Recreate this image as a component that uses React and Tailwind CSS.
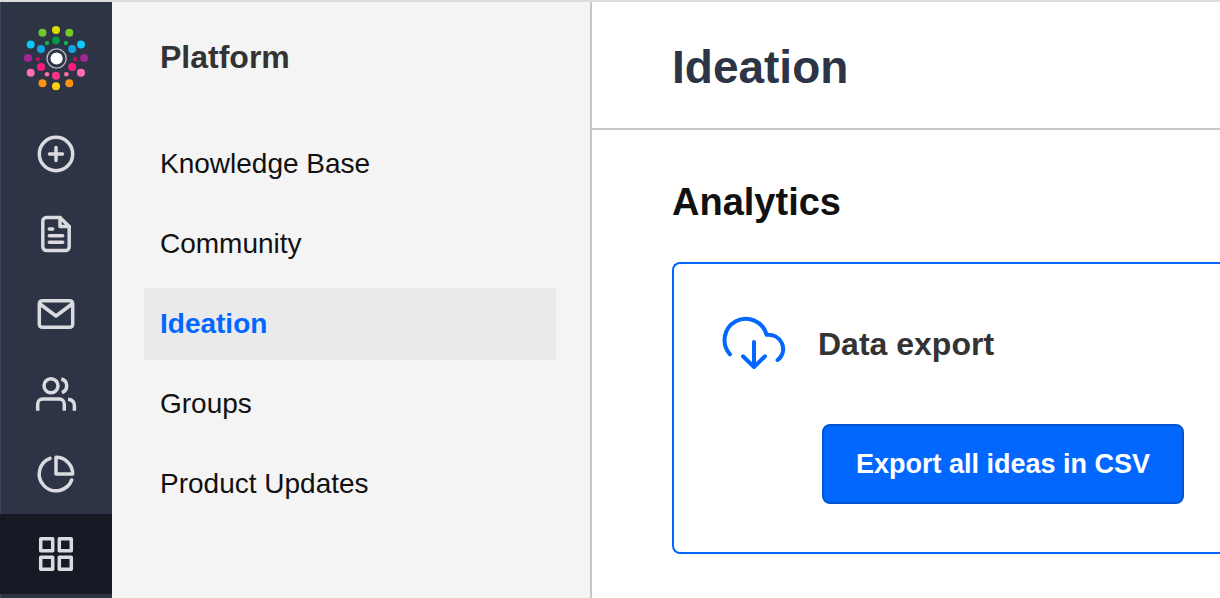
import React, { useState } from "react";
import clsx from "clsx";

const logoDots = [
  [56, 30, 4, "#dbe000"],
  [42.5, 32.8, 4, "#72c92b"],
  [69.3, 32.8, 4, "#72c92b"],
  [56, 40.3, 3.9, "#009a44"],
  [47, 43, 2.2, "#12b24a"],
  [66, 43, 2.2, "#12b24a"],
  [30.7, 44.6, 4, "#0cc8f7"],
  [81, 44.6, 4, "#0cc8f7"],
  [41, 49, 4, "#10a4e6"],
  [72.2, 49, 4, "#10a4e6"],
  [28, 58, 4.1, "#a4268f"],
  [84.2, 58, 4.1, "#a4268f"],
  [38, 59.3, 2.2, "#bd1164"],
  [75.2, 59.3, 2.2, "#bd1164"],
  [41, 67, 4, "#ff1a7f"],
  [72.2, 67, 4, "#ff1a7f"],
  [30.7, 72.7, 4, "#ff70ad"],
  [81, 72.7, 4, "#ff70ad"],
  [47, 74.3, 2.3, "#ff70ad"],
  [66.3, 74.3, 2.3, "#ff70ad"],
  [56, 75.7, 4, "#ff3385"],
  [42.5, 83.2, 4, "#ff930f"],
  [69.3, 83.2, 4, "#ff930f"],
  [56, 86.2, 4, "#ffd00d"],
];

const Logo = () => (
  <svg className="size-18" viewBox="20 22 72 72" aria-hidden="true">
    {logoDots.map(([cx, cy, r, fill]) => (
      <circle key={`${cx}-${cy}`} cx={cx} cy={cy} r={r} fill={fill} />
    ))}
    <circle cx="56.6" cy="58.5" r="9.6" fill="none" stroke="#b4b8c2" strokeWidth="1.4" />
    <circle cx="56.6" cy="58.5" r="6.1" fill="#fff" />
  </svg>
);

const RailIcon = ({ children }) => (
  <svg
    className="size-12"
    viewBox="0 0 48 48"
    fill="none"
    stroke="currentColor"
    strokeWidth="3.5"
    strokeLinecap="round"
    strokeLinejoin="round"
    aria-hidden="true"
  >
    {children}
  </svg>
);

const railItems = [
  {
    label: "Create",
    icon: (
      <>
        <circle cx="24" cy="24" r="16.7" />
        <path d="M24 17.5v13M17.5 24h13" />
      </>
    ),
  },
  {
    label: "Content",
    icon: (
      <>
        <path d="M28 7.5H14.5a3.7 3.7 0 0 0-3.7 3.7v25.6a3.7 3.7 0 0 0 3.7 3.7h19a3.7 3.7 0 0 0 3.7-3.7V16.5Z" />
        <path d="M28 7.5v9h9.2" />
        <path d="M17.3 19h3.4M17.3 25.7h13.4M17.3 32.2h13.4" />
      </>
    ),
  },
  {
    label: "Messages",
    icon: (
      <>
        <rect x="7.3" y="10.7" width="33.4" height="26.6" rx="3" />
        <path d="M8 14l16 12 16-12" />
      </>
    ),
  },
  {
    label: "Users",
    icon: (
      <>
        <circle cx="19" cy="15.7" r="7" />
        <path d="M5.7 40.7V34a5 5 0 0 1 5-5h16.6a5 5 0 0 1 5 5v6.7" strokeLinecap="butt" />
        <path d="M29.3 9a7 7 0 0 1 .5 13.500" strokeLinecap="butt" />
        <path d="M36 29.3c4 .4 6.4 2.6 6.4 6.3v5.1" strokeLinecap="butt" />
      </>
    ),
  },
  {
    label: "Reports",
    icon: (
      <>
        <path d="M18 8.3A16.8 16.8 0 1 0 39.7 30" />
        <path d="M24 7.3V24h16.7A16.7 16.7 0 0 0 24 7.3Z" />
      </>
    ),
  },
  {
    label: "Platform",
    active: true,
    icon: (
      <>
        <rect x="8.7" y="8.7" width="12" height="12" />
        <rect x="27.3" y="8.7" width="12" height="12" />
        <rect x="8.7" y="27.3" width="12" height="12" />
        <rect x="27.3" y="27.3" width="12" height="12" />
      </>
    ),
  },
];

const navItems = ["Knowledge Base", "Community", "Ideation", "Groups", "Product Updates"];

const CloudDownload = () => (
  <svg
    className="size-16 shrink-0"
    viewBox="0 0 64 64"
    fill="none"
    stroke="currentColor"
    strokeWidth="4"
    strokeLinecap="round"
    strokeLinejoin="round"
    aria-hidden="true"
  >
    <path d="M8 42.3A21.3 21.3 0 1 1 44.5 22.8c6.5-.6 12.5 2.4 15.3 8.2 2.8 6 1.3 12.8-4.2 17" />
    <path d="M32 30v25M21 44.3L32 55l11-10.7" />
  </svg>
);

const Rail = () => (
  <nav
    aria-label="Main"
    className="w-28 shrink-0 bg-[#2d3446] text-[#dadbdf] shadow-[inset_1px_0_#3d4558]"
  >
    <a href="#" aria-label="Home" className="flex h-28 items-center justify-center">
      <Logo />
    </a>
    {railItems.map((item) => (
      <a
        key={item.label}
        href="#"
        aria-label={item.label}
        className={clsx("flex h-20 items-center justify-center", item.active && "bg-[#171a25]")}
      >
        <RailIcon>{item.icon}</RailIcon>
      </a>
    ))}
  </nav>
);

const PlatformMenu = ({ current, onSelect }) => (
  <aside className="w-120 shrink-0 border-r-2 border-[#c6c6c6] bg-[#f4f4f4] pr-[34px] pl-8">
    <h2 className="px-4 pt-8 pb-12 text-[32px] leading-[46px] font-bold text-[#333]">
      Platform
    </h2>
    <ul className="flex flex-col gap-2">
      {navItems.map((item) => (
        <li key={item}>
          <a
            href="#"
            aria-current={item === current ? "page" : undefined}
            onClick={() => onSelect(item)}
            className={clsx(
              "flex h-18 items-center rounded px-4 text-[28px]",
              item === current ? "bg-[#e9eaec] font-bold text-[#0267ff]" : "text-[#111]"
            )}
          >
            {item}
          </a>
        </li>
      ))}
    </ul>
  </aside>
);

const App = () => {
  const [current, setCurrent] = useState("Ideation");

  return (
    <div className="flex min-h-screen overflow-hidden border-t-2 border-[#dcdcdc] bg-white font-['Liberation_Sans',Arial,sans-serif]">
      <Rail />
      <PlatformMenu current={current} onSelect={setCurrent} />
      <main className="min-w-0 flex-1">
        <header className="flex h-32 items-center border-b-2 border-[#c8c8c8] pt-1 pl-20">
          <h1 className="text-[46px] font-bold text-[#2d3446]">{current}</h1>
        </header>
        <section className="pt-10 pl-20">
          <h2 className="mb-7 text-[38px] leading-16 font-bold text-[#111]">Analytics</h2>
          <div className="rounded-l-lg border-2 border-r-0 border-[#0267ff] p-12">
            <div className="flex items-center gap-8 text-[#0267ff]">
              <CloudDownload />
              <h3 className="text-[32px] font-bold text-[#333]">Data export</h3>
            </div>
            <button
              type="button"
              className="mt-12 ml-25 h-20 rounded-lg border-2 border-[#0455d0] bg-[#0267ff] px-8 text-[27px] font-bold whitespace-nowrap text-white"
            >
              Export all ideas in CSV
            </button>
          </div>
        </section>
      </main>
    </div>
  );
};

export default App;
